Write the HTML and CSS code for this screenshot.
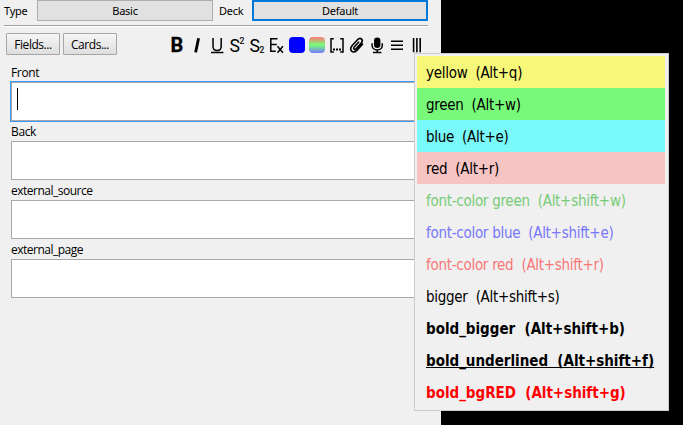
FILE: index.html
```html
<!DOCTYPE html>
<html lang="en">
<head>
<meta charset="utf-8">
<title>Add</title>
<link rel="stylesheet" href="styles.css">
</head>
<body>
<main class="editor">
  <header class="selectors">
    <span class="type-label">Type</span>
    <button class="chooser">Basic</button>
    <span class="deck-label">Deck</span>
    <button class="chooser chooser-active">Default</button>
  </header>
  <div class="toolbar">
    <button class="tool-button">Fields...</button>
    <button class="tool-button">Cards...</button>
    <div class="icons">
      <svg viewBox="0 0 20 20"><text class="glyph heavy" x="3.5" y="15.2">B</text></svg>
      <svg viewBox="0 0 20 20"><path class="line thick" d="M11.6 1.2 8.6 15.4"/></svg>
      <svg viewBox="0 0 20 20"><path class="line" d="M6 1v8.2c0 5.7 8.2 5.7 8.2 0V1M4 15.6h12.4"/></svg>
      <svg viewBox="0 0 20 20"><text class="glyph" x="2.5" y="15.2" textLength="10.5" lengthAdjust="spacingAndGlyphs">S</text><text class="glyph small" x="12.5" y="6.8">2</text></svg>
      <svg viewBox="0 0 20 20"><text class="glyph" x="2.5" y="15.2" textLength="10.5" lengthAdjust="spacingAndGlyphs">S</text><text class="glyph small" x="12.5" y="15.8">2</text></svg>
      <svg viewBox="0 0 20 20"><path class="line" d="M10.5 1.8H3.8v12.4h5M3.8 7.6h6M10.5 9.3l5.4 6.4M15.9 9.3l-5.4 6.4"/></svg>
      <span class="swatch blue"></span>
      <span class="swatch rainbow"></span>
      <svg viewBox="0 0 20 20"><path class="line" d="M6.8 1.8H4v13.3h2.8M13.2 1.8H16v13.3h-2.8"/><path class="dots" d="M6 11.5h2v2H6zM9 11.5h2v2H9zM12 11.5h2v2h-2z"/></svg>
      <svg viewBox="0 0 20 20"><path class="line clip" d="M11.6 5.2 7.2 10c-1.4 1.8.4 3.2 1.9 1.7l5.1-5.6C17 2.8 13.5-.3 10.5 2.7L5.4 8.3c-4.1 4.7.6 9.3 4.7 4.8l5.4-6"/></svg>
      <svg viewBox="0 0 20 20"><rect x="7" y=".4" width="6.4" height="10.6" rx="3.2"/><path class="line" d="M5.1 6.3v2c0 6.2 10.2 6.2 10.2 0v-2M10.2 13v2.2M6 15.5h8.4"/></svg>
      <svg viewBox="0 0 20 20"><path class="line" d="M4 4.2h12M4 8.2h12M4 12.2h12"/></svg>
      <svg viewBox="0 0 20 20"><path class="line bars" d="M6.6 1v14.2M9.9 1v14.2M13.2 1v14.2"/></svg>
    </div>
  </div>
  <div class="fields">
    <label>Front</label>
    <div class="input focused"><span class="caret"></span></div>
    <label>Back</label>
    <div class="input"></div>
    <label class="tight">external_source</label>
    <div class="input"></div>
    <label class="tight">external_page</label>
    <div class="input"></div>
  </div>
</main>
<nav class="menu">
  <div class="item bg-yellow">yellow&nbsp; (Alt+q)</div>
  <div class="item bg-green">green&nbsp; (Alt+w)</div>
  <div class="item bg-blue">blue&nbsp; (Alt+e)</div>
  <div class="item bg-red">red&nbsp; (Alt+r)</div>
  <div class="item fg-green">font-color green&nbsp; (Alt+shift+w)</div>
  <div class="item fg-blue">font-color blue&nbsp; (Alt+shift+e)</div>
  <div class="item fg-red">font-color red&nbsp; (Alt+shift+r)</div>
  <div class="item">bigger&nbsp; (Alt+shift+s)</div>
  <div class="item bold">bold_bigger&nbsp; (Alt+shift+b)</div>
  <div class="item bold underlined">bold_underlined&nbsp; (Alt+shift+f)</div>
  <div class="item bold alert">bold_bgRED&nbsp; (Alt+shift+g)</div>
</nav>
</body>
</html>
```
FILE: styles.css
```css
* { box-sizing: border-box; }
body {
  margin: 0;
  height: 425px;
  overflow: hidden;
  background: #000;
  color: #000;
  font: 12px/16px "Open Sans", "Noto Sans", sans-serif;
}
.editor { width: 441px; height: 425px; background: #f0f0f0; }
.selectors {
  display: grid;
  grid-template-columns: 33px 176px 6px 33px 176px;
  height: 26px;
  margin: 0 13px 0 4px;
  border-bottom: 1px solid #a0a0a0;
  box-shadow: 0 1px #fff;
  font-family: "Noto Sans", sans-serif;
  font-size: 11px;
  letter-spacing: -.25px;
}
.type-label, .deck-label { padding-top: 3px; }
.deck-label { grid-column: 4; }
.chooser {
  height: 21px;
  padding: 1px 0 0;
  border: 1px solid #adadad;
  background: #e1e1e1;
  color: #000;
  font: inherit;
  letter-spacing: inherit;
}
.chooser-active { border: 2px solid #0078d7; }
.toolbar { display: flex; gap: 3px; padding: 7px 0 0 6px; height: 36px; }
.tool-button {
  width: 54px;
  height: 22px;
  padding: 1px 0 0;
  border: 1px solid #a6a6a6;
  border-radius: 1px;
  background: linear-gradient(#f6f6f6, #dedede);
  color: #000;
  font: 12px/18px "Open Sans", sans-serif;
  letter-spacing: -.45px;
}
.icons { display: flex; margin: 4px 0 0 47px; height: 20px; }
.icons svg { width: 20px; height: 20px; overflow: visible; }
.glyph { font: 19px Roboto, sans-serif; }
.heavy { font-weight: 700; font-size: 20px; stroke: #000; stroke-width: .3; }
.small { font-size: 8.5px; stroke: #000; stroke-width: .2; }
.line { fill: none; stroke: #000; stroke-width: 1.5; }
.thick { stroke-width: 2.8; }
.clip { stroke-width: 1.6; stroke-linecap: round; }
.bars { stroke-width: 1.6; }
.swatch { width: 16px; height: 16px; margin: 0 2px; border-radius: 4px; }
.blue { background: #00f; }
.rainbow { background: linear-gradient(#f77, #7f7 50%, #77f); }
.fields { padding-left: 11px; }
.fields label { display: block; height: 20px; padding-top: 3px; letter-spacing: -.35px; }
.fields .tight { letter-spacing: -.5px; }
.input { height: 39px; border: 1px solid #a9a9a9; background: #fff; }
.focused { box-shadow: 0 0 0 1px #3b99fc; padding: 5px; }
.caret { display: block; width: 1px; height: 22px; background: #000; }
.menu {
  position: absolute;
  left: 414px;
  top: 53px;
  width: 255px;
  height: 358px;
  padding: 2px 3px 2px 2px;
  border: 1px solid #ccc;
  background: #f0f0f0;
  font: 15px/32px "DejaVu Sans Condensed", "DejaVu Sans", sans-serif;
}
.item { height: 32px; padding: 1px 0 0 9px; white-space: nowrap; letter-spacing: -.28px; }
.bg-yellow { background: #f7f779; }
.bg-green { background: #79f979; }
.bg-blue { background: #79f9f9; }
.bg-red { background: #f7c4c4; }
.fg-green { color: #77cc77; }
.fg-blue { color: #7777f7; }
.fg-red { color: #f77777; }
.bold { font-weight: 700; letter-spacing: -.02px; }
.underlined { text-decoration: underline; text-decoration-skip-ink: none; }
.alert { color: #f00; }
```
